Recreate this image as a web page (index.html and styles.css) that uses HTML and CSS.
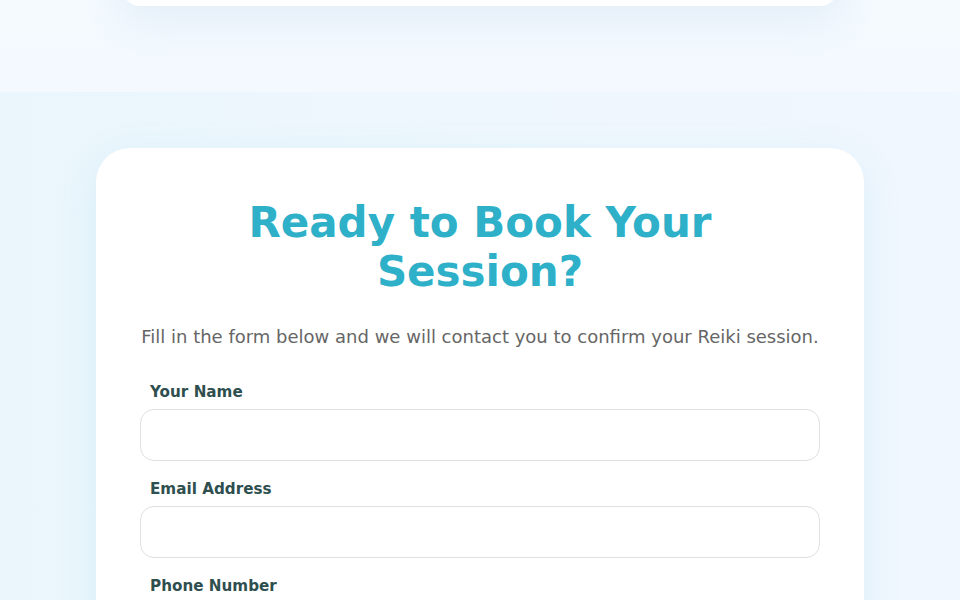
FILE: index.html
```html
<!DOCTYPE html>
<html lang="en">
<head>
    <meta charset="UTF-8">
    <meta name="viewport" content="width=device-width, initial-scale=1.0">
    <title>Book a Reiki Session</title>
    <link rel="stylesheet" href="styles.css">
</head>
<body>
    <section class="intro">
        <div class="intro-card"></div>
    </section>

    <section class="booking">
        <div class="booking-card">
            <h2>Ready to Book Your Session?</h2>
            <p class="lead">Fill in the form below and we will contact you to confirm your Reiki session.</p>
            <form class="booking-form">
                <div class="form-group">
                    <label for="name">Your Name</label>
                    <input type="text" id="name">
                </div>
                <div class="form-group">
                    <label for="email">Email Address</label>
                    <input type="email" id="email">
                </div>
                <div class="form-group">
                    <label for="phone">Phone Number</label>
                    <input type="tel" id="phone">
                </div>
            </form>
        </div>
    </section>
</body>
</html>
```

FILE: styles.css
```css
body { margin: 0; font-family: "DejaVu Sans", sans-serif; background: #eef7fd; overflow: hidden; }
.intro { background: linear-gradient(180deg, #f6fbfe 0%, #f3f9fe 100%); padding: 0 122px 86px; }
.intro-card { margin-top: -200px; height: 206px; background: #fff; border-radius: 0 0 18px 18px; box-shadow: 0 14px 40px rgba(120, 170, 210, 0.14); }
.booking { background: linear-gradient(90deg, #eaf6fc 0%, #eef7fd 50%, #f0f7fe 100%); padding: 56px 96px 40px; }
.booking-card { background: #fff; border-radius: 34px; padding: 50px 44px 40px; box-shadow: 0 10px 40px rgba(60, 170, 210, 0.10); }
.booking-card h2 { margin: 0 auto 27px; max-width: 500px; text-align: center; color: #2eb0c9; font-size: 42px; line-height: 49px; font-weight: bold; }
.lead { margin: 0 0 31px; text-align: center; color: #666; font-size: 18px; line-height: 27px; }
.form-group { margin-bottom: 17px; }
.form-group label { display: block; padding-left: 10px; margin-bottom: 5px; font-size: 15.2px; line-height: 23px; font-weight: bold; color: #2f4f4f; }
.form-group input { display: block; width: 100%; height: 52px; box-sizing: border-box; border: 1px solid #e0e0e0; border-radius: 14px; padding: 0 16px; font-size: 16px; background: #fff; }
```
